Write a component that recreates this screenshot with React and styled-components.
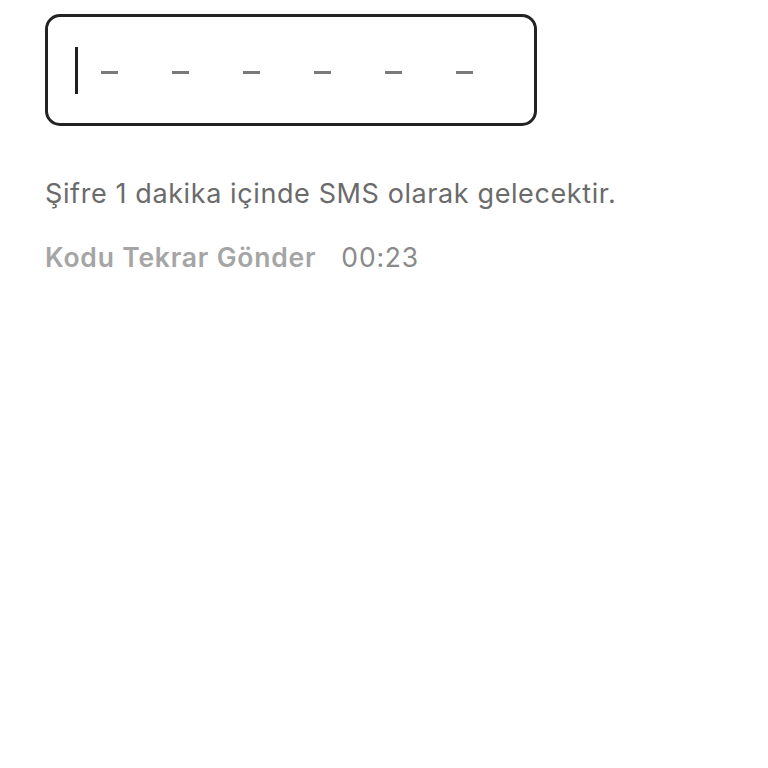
import React from "react";
import styled, { createGlobalStyle } from "styled-components";

const Global = createGlobalStyle`
  html, body { margin: 0; padding: 0; background: #fff; }
  body { font-family: Inter, "Noto Sans", "Liberation Sans", sans-serif; }
`;

const Page = styled.div`
  width: 768px;
  height: 768px;
  padding: 14px 0 0 45px;
  box-sizing: border-box;
  background: #fff;
`;

const CodeBox = styled.div`
  width: 492px;
  height: 112px;
  box-sizing: border-box;
  border: 3px solid #232323;
  border-radius: 15px;
  display: flex;
  align-items: center;
  padding-left: 27px;
`;

const Caret = styled.span`
  width: 3px;
  height: 47px;
  background: #1e1e1e;
  margin-right: 23px;
`;

const Slots = styled.div`
  display: flex;
  gap: 54px;
  padding-top: 4px;
`;

const Slot = styled.span`
  width: 17px;
  height: 3px;
  background: #7a7a7a;
`;

const Hint = styled.p`
  margin: 53px 0 0 0;
  font-size: 27px;
  line-height: 30px;
  color: #6b6b6b;
  font-weight: 400;
  letter-spacing: 0.6px;
`;

const ResendRow = styled.div`
  margin-top: 33px;
  display: flex;
  align-items: baseline;
  gap: 25px;
  font-size: 26.5px;
  line-height: 30px;
  letter-spacing: 0.8px;
`;

const ResendLink = styled.span`
  font-weight: 600;
  color: #a5a5a5;
`;

const Timer = styled.span`
  font-weight: 400;
  color: #8a8a8a;
`;

export default function App() {
  return (
    <>
      <Global />
      <Page>
        <CodeBox>
          <Caret />
          <Slots>
            {Array.from({ length: 6 }).map((_, i) => (
              <Slot key={i} />
            ))}
          </Slots>
        </CodeBox>
        <Hint>Şifre 1 dakika içinde SMS olarak gelecektir.</Hint>
        <ResendRow>
          <ResendLink>Kodu Tekrar Gönder</ResendLink>
          <Timer>00:23</Timer>
        </ResendRow>
      </Page>
    </>
  );
}
